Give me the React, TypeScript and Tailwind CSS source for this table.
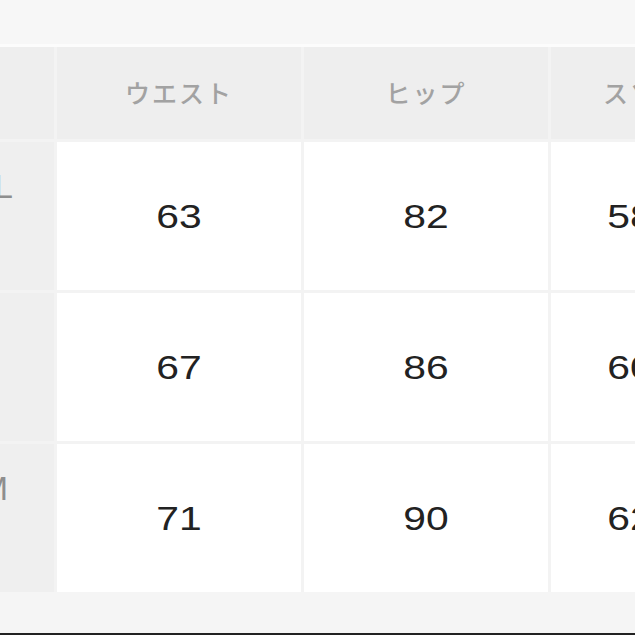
import React from "react";

const HEADERS = ["ウエスト", "ヒップ", "スソ"];

// label padding is per row so each label's right edge lands where the crop shows it
const ROWS = [
  { label: "SMALL", labelPad: "pr-[41px]", values: ["63", "82", "58"] },
  { label: "REGULAR", labelPad: "pr-[72px]", values: ["67", "86", "60"] },
  { label: "MEDIUM", labelPad: "pr-[46px]", values: ["71", "90", "62"] },
];

const jp = { fontFamily: '"Noto Sans CJK JP", "Noto Sans", sans-serif' };
const num = { fontFamily: '"Liberation Sans", Arial, sans-serif' };

export default function App() {
  return (
    <div className="flex h-[635px] w-[635px] flex-col overflow-hidden bg-[#f7f7f7]">
      <div className="h-[44px] shrink-0" />
      <div className="h-[3px] shrink-0 bg-[#fcfcfc]" />

      <div className="-ml-[66px] grid shrink-0 grid-cols-[120px_244px_244px_158px] grid-rows-[92px_148px_148px_148px] gap-[3px] bg-[#f3f3f3]">
        <div className="bg-[#eeeeee]" />
        {HEADERS.map((h) => (
          <div
            key={h}
            style={jp}
            className="flex items-center justify-center bg-[#eeeeee] text-[25px] font-medium tracking-[2px] whitespace-nowrap text-[#a2a2a2]"
          >
            {h}
          </div>
        ))}

        {ROWS.map((r) => (
          <React.Fragment key={r.label}>
            <div
              style={num}
              className={`flex items-start justify-end bg-[#efefef] pt-[27px] text-[34px] leading-none whitespace-nowrap text-[#8e8e8e] ${r.labelPad}`}
            >
              {r.label}
            </div>
            {r.values.map((v, i) => (
              <div key={i} className="flex items-center justify-center bg-white">
                <span
                  style={num}
                  className="inline-block scale-x-[1.2] text-[34px] leading-none text-[#222222]"
                >
                  {v}
                </span>
              </div>
            ))}
          </React.Fragment>
        ))}
      </div>

      <div className="flex-1 bg-[#f5f5f5]" />
      <div className="h-[2px] shrink-0 bg-[#222222]" />
    </div>
  );
}
